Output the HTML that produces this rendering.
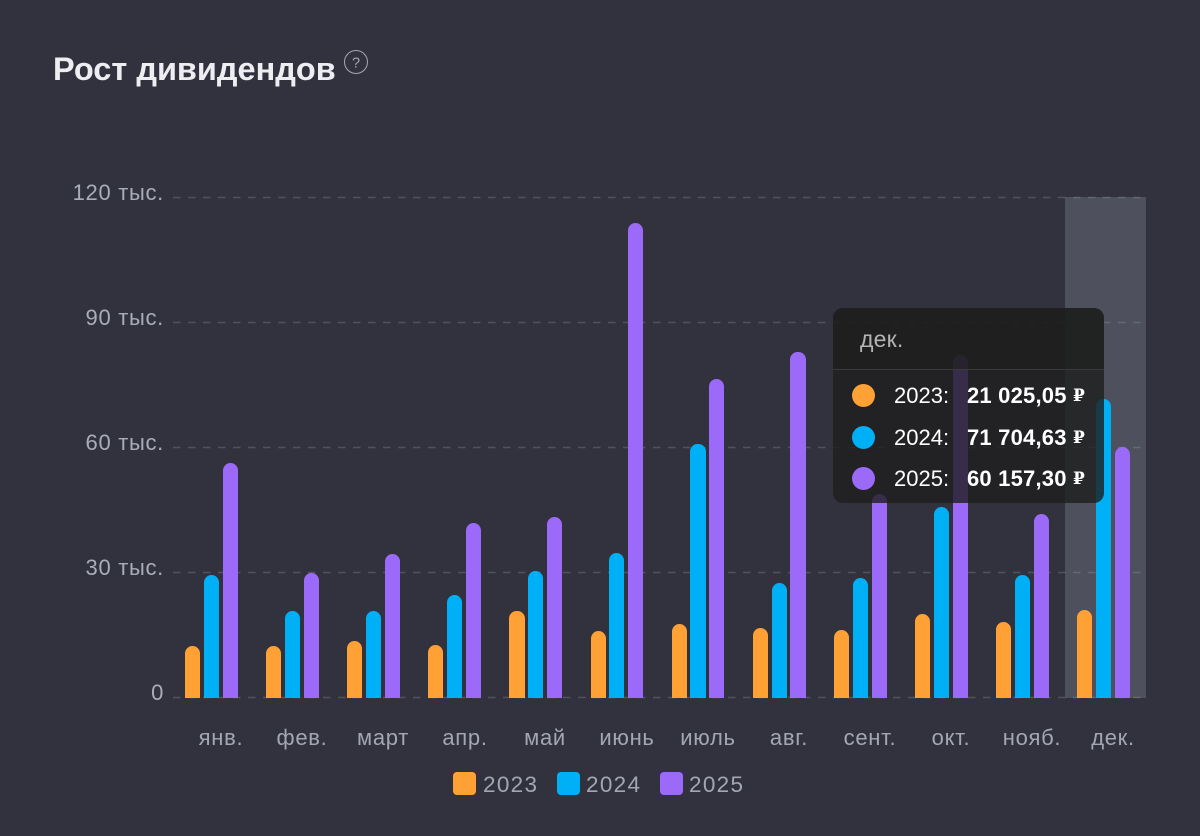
<!DOCTYPE html>
<html lang="ru"><head><meta charset="utf-8"><title>Рост дивидендов</title>
<style>
html,body{margin:0;padding:0}
body{width:1200px;height:836px;background:#32323e;position:relative;overflow:hidden;font-family:"Liberation Sans",sans-serif}
h1{position:absolute;left:53px;top:50px;margin:0;font-size:32.5px;line-height:38px;font-weight:700;color:#eeeef2;white-space:nowrap;letter-spacing:0}
.y{position:absolute;right:1036px;font-size:22px;line-height:26px;color:#a9adb9;white-space:nowrap;letter-spacing:.7px}
.x{position:absolute;top:725px;width:100px;text-align:center;font-size:22px;line-height:26px;color:#a3a7b3;white-space:nowrap;letter-spacing:.7px}
.b{position:absolute;bottom:138.5px;width:15.2px;border-radius:7.6px 7.6px 0 0}
.o{background:#ffa134}.c{background:#00b0f6}.p{background:#9c6af9}
.band{position:absolute;left:1065px;top:197px;width:81px;height:501px;background:rgba(164,172,188,.25)}
.tip{position:absolute;left:833px;top:308px;width:271px;height:195px;border-radius:10px;background:rgba(30,30,30,.8)}
.tip .hd{position:absolute;left:0;right:0;top:0;height:61px;border-bottom:1px solid #3a3a3b;border-radius:10px 10px 0 0;background:rgba(30,30,30,.65)}
.tip .m{position:absolute;left:27px;top:18px;font-size:23px;line-height:26px;color:#b4b4b4;letter-spacing:.2px}
.d{position:absolute;left:19px;width:23px;height:23px;border-radius:50%}
.yr{position:absolute;left:61px;font-size:22px;line-height:26px;color:#fff}
.v{position:absolute;left:134px;font-size:22px;line-height:26px;font-weight:700;color:#fff;white-space:nowrap;letter-spacing:.2px}
.r{position:absolute;left:240px;font-family:"DejaVu Serif","Liberation Serif",serif;font-size:17px;line-height:26px;font-weight:700;color:#fff}
.k{position:absolute;top:772px;width:23px;height:23px;border-radius:4px}
.l{position:absolute;top:772px;font-size:22.5px;line-height:26px;color:#a3a7b3;letter-spacing:1.3px}
svg{position:absolute;left:0;top:0}
</style></head><body>
<h1>Рост дивидендов</h1>
<svg width="1200" height="836" viewBox="0 0 1200 836" fill="none">
<circle cx="356" cy="62" r="11.5" stroke="#a5a8b3" stroke-width="1"/>
<text x="356" y="67.5" text-anchor="middle" font-family="Liberation Sans" font-size="14.5" fill="#a5a8b3">?</text>
<g stroke="#4f535e" stroke-width="1.6" stroke-dasharray="7.5 7.5">
<path d="M173 197.5H1146"/><path d="M173 322.5H1146"/><path d="M173 447.5H1146"/><path d="M173 572.5H1146"/><path d="M173 697.5H1146"/>
</g></svg>
<div class="y" style="top:180px">120 тыс.</div>
<div class="y" style="top:305px">90 тыс.</div>
<div class="y" style="top:430px">60 тыс.</div>
<div class="y" style="top:555px">30 тыс.</div>
<div class="y" style="top:680px">0</div>

<div class="band"></div>

<div class="b o" style="left:185px;top:646px"></div><div class="b c" style="left:203.8px;top:575px"></div><div class="b p" style="left:222.7px;top:463px"></div>
<div class="b o" style="left:266.1px;top:646px"></div><div class="b c" style="left:284.9px;top:611px"></div><div class="b p" style="left:303.8px;top:573px"></div>
<div class="b o" style="left:347.2px;top:641px"></div><div class="b c" style="left:366px;top:611px"></div><div class="b p" style="left:384.9px;top:554px"></div>
<div class="b o" style="left:428.3px;top:645px"></div><div class="b c" style="left:447.1px;top:595px"></div><div class="b p" style="left:466px;top:523px"></div>
<div class="b o" style="left:509.4px;top:611px"></div><div class="b c" style="left:528.2px;top:571px"></div><div class="b p" style="left:547.1px;top:517px"></div>
<div class="b o" style="left:590.5px;top:631px"></div><div class="b c" style="left:609.3px;top:553px"></div><div class="b p" style="left:628.2px;top:223px"></div>
<div class="b o" style="left:671.6px;top:624px"></div><div class="b c" style="left:690.4px;top:444px"></div><div class="b p" style="left:709.3px;top:379px"></div>
<div class="b o" style="left:752.7px;top:628px"></div><div class="b c" style="left:771.5px;top:583px"></div><div class="b p" style="left:790.4px;top:352px"></div>
<div class="b o" style="left:833.8px;top:630px"></div><div class="b c" style="left:852.6px;top:578px"></div><div class="b p" style="left:871.5px;top:494px"></div>
<div class="b o" style="left:914.9px;top:614px"></div><div class="b c" style="left:933.7px;top:507px"></div><div class="b p" style="left:952.6px;top:355px"></div>
<div class="b o" style="left:996px;top:622px"></div><div class="b c" style="left:1014.8px;top:575px"></div><div class="b p" style="left:1033.7px;top:514px"></div>
<div class="b o" style="left:1077.1px;top:610px"></div><div class="b c" style="left:1095.9px;top:399px"></div><div class="b p" style="left:1114.8px;top:447px"></div>

<div class="x" style="left:171px">янв.</div>
<div class="x" style="left:252px">фев.</div>
<div class="x" style="left:333px">март</div>
<div class="x" style="left:415px">апр.</div>
<div class="x" style="left:495px">май</div>
<div class="x" style="left:577px">июнь</div>
<div class="x" style="left:658px">июль</div>
<div class="x" style="left:739px">авг.</div>
<div class="x" style="left:820px">сент.</div>
<div class="x" style="left:901px">окт.</div>
<div class="x" style="left:982px">нояб.</div>
<div class="x" style="left:1063px">дек.</div>

<div class="k o" style="left:453px"></div><div class="l" style="left:483px">2023</div>
<div class="k c" style="left:557px"></div><div class="l" style="left:586px">2024</div>
<div class="k p" style="left:660px"></div><div class="l" style="left:689px">2025</div>

<div class="tip">
<div class="hd"></div>
<div class="m">дек.</div>
<div class="d o" style="top:76px"></div><div class="yr" style="top:75px">2023:</div><div class="v" style="top:75px">21 025,05</div><div class="r" style="top:75px">₽</div>
<div class="d c" style="top:118px"></div><div class="yr" style="top:117px">2024:</div><div class="v" style="top:117px">71 704,63</div><div class="r" style="top:117px">₽</div>
<div class="d p" style="top:159px"></div><div class="yr" style="top:158px">2025:</div><div class="v" style="top:158px">60 157,30</div><div class="r" style="top:158px">₽</div>
</div>
</body></html>
